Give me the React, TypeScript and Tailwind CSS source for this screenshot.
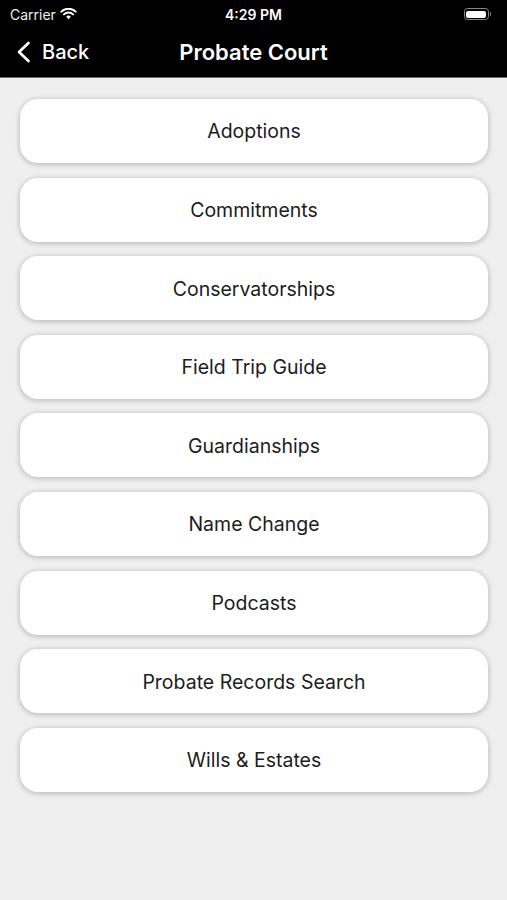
import React from "react";

const items = [
  "Adoptions",
  "Commitments",
  "Conservatorships",
  "Field Trip Guide",
  "Guardianships",
  "Name Change",
  "Podcasts",
  "Probate Records Search",
  "Wills & Estates",
];

export default function App() {
  return (
    <div
      className="w-[507px] h-[900px] bg-[#efefef] flex flex-col"
      style={{ fontFamily: "Inter, 'Noto Sans', sans-serif" }}
    >
      <div className="bg-black text-white h-[78px] flex flex-col border-b border-[#6b6b6b]">
        <div className="h-[28px] flex items-center px-[10px] relative">
          <div className="flex items-center gap-[4px] text-[14px] text-[#f0f0f0]">
            <span>Carrier</span>
            <svg width="17" height="12" viewBox="0 0 17 12">
              <path d="M8.5 11.2 L6.2 8.7 A3.3 3.3 0 0 1 10.8 8.7 Z" fill="white" />
              <path d="M3.9 6.4 A6.6 6.6 0 0 1 13.1 6.4" stroke="white" strokeWidth="1.9" fill="none" strokeLinecap="round" />
              <path d="M1.3 3.7 A10.2 10.2 0 0 1 15.7 3.7" stroke="white" strokeWidth="1.9" fill="none" strokeLinecap="round" />
            </svg>
          </div>
          <div className="absolute left-0 right-0 top-0 h-[28px] flex items-center justify-center text-[14px] font-semibold">
            4:29 PM
          </div>
          <div className="ml-auto flex items-center mr-[6px]">
            <div className="w-[25px] h-[12px] rounded-[3.5px] border border-[#888] p-[1.5px]">
              <div className="w-full h-full bg-white rounded-[2px]" />
            </div>
            <div className="w-[1.5px] h-[4px] bg-[#888] rounded-r-sm ml-[1px]" />
          </div>
        </div>
        <div className="flex-1 flex items-center relative pl-[16px] pb-[1px]">
          <div className="flex items-center gap-[11px]">
            <svg width="15" height="22" viewBox="0 0 15 22">
              <path d="M12.5 2 L3 11 L12.5 20" stroke="white" strokeWidth="2.7" fill="none" strokeLinecap="round" strokeLinejoin="round" />
            </svg>
            <span className="text-[20px] font-medium">Back</span>
          </div>
          <div className="absolute inset-0 flex items-center justify-center text-[22px] font-semibold pb-[1px]">
            Probate Court
          </div>
        </div>
      </div>
      <div className="flex flex-col gap-[14.6px] px-[20px] pt-[21px] w-[507px]">
        {items.map((t) => (
          <div
            key={t}
            className="w-[468px] h-[64px] bg-white rounded-[18px] flex items-center justify-center text-[19.5px] text-[#1c1c1c] pt-[2px] shadow-[0_1px_5px_1px_rgba(0,0,0,0.2)]"
          >
            {t}
          </div>
        ))}
      </div>
    </div>
  );
}
